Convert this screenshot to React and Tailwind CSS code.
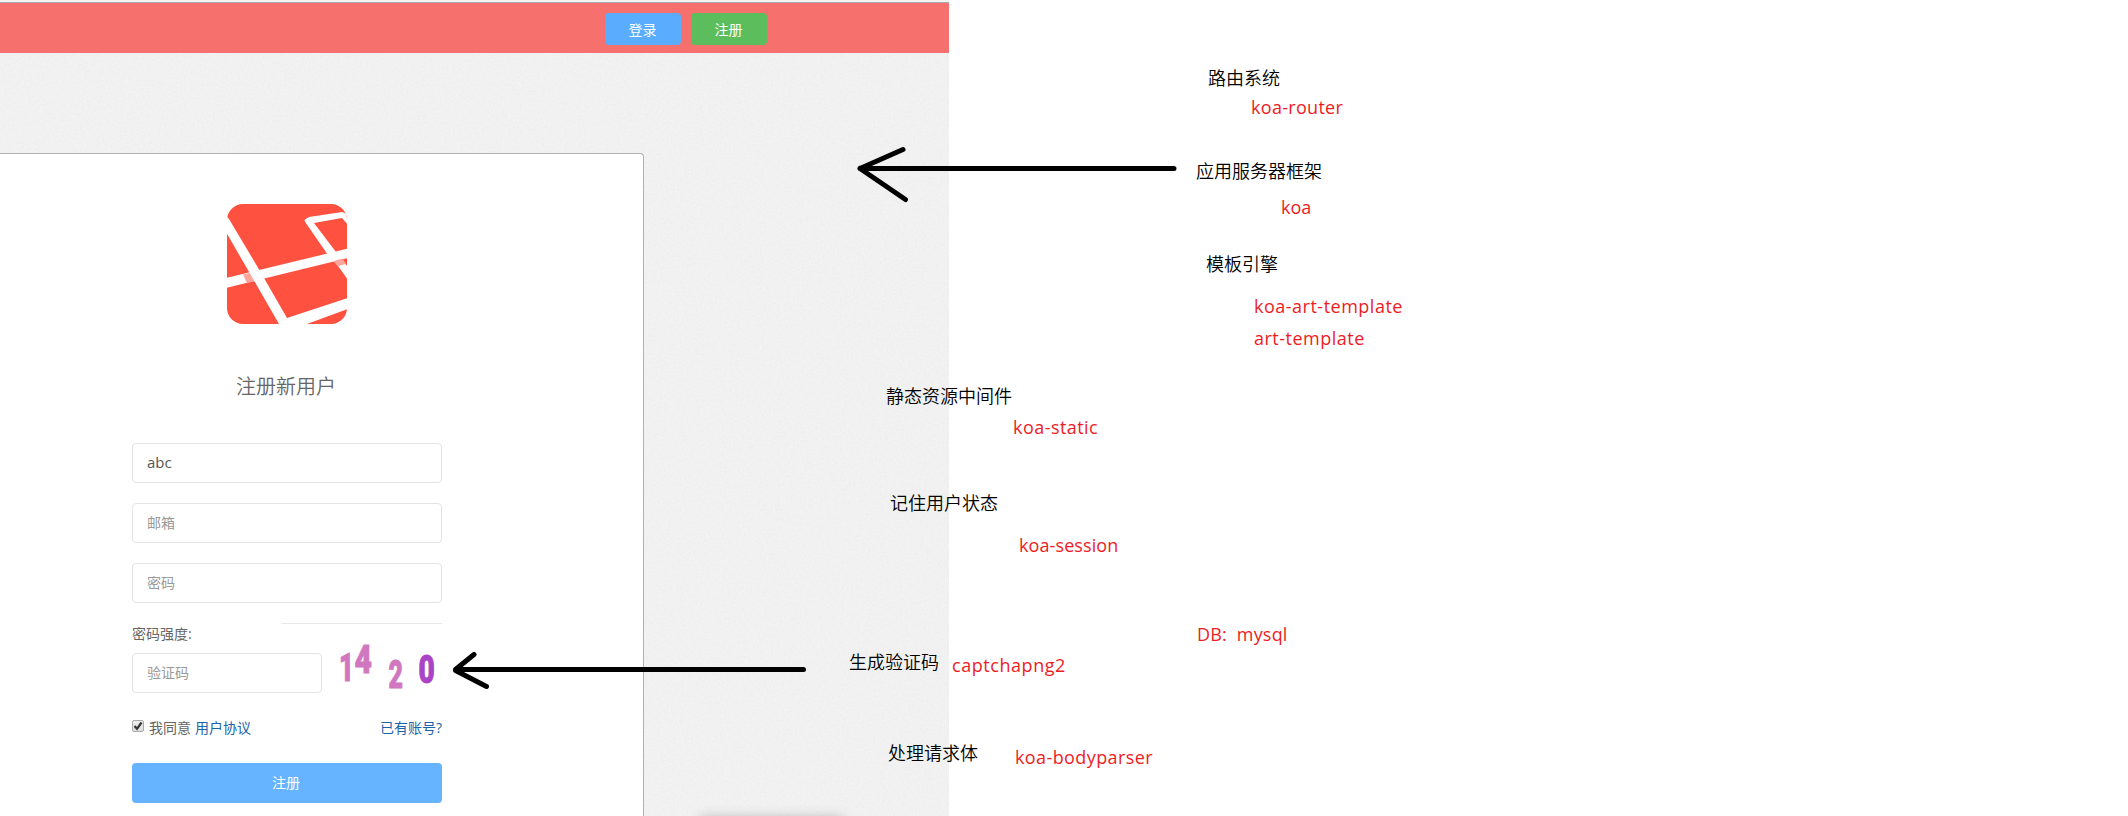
const notes = [
  { text: '路由系统', cls: 'left-[1208px] top-[66px]' },
  { text: '应用服务器框架', cls: 'left-[1196px] top-[159px]' },
  { text: '模板引擎', cls: 'left-[1206px] top-[252px]' },
  { text: '静态资源中间件', cls: 'left-[886px] top-[384px]' },
  { text: '记住用户状态', cls: 'left-[890px] top-[491px]' },
  { text: '生成验证码', cls: 'left-[849px] top-[650px]' },
  { text: '处理请求体', cls: 'left-[888px] top-[741px]' },
];

const packages = [
  { text: 'koa-router', cls: 'left-[1251px] top-[95px] tracking-[0.3px]' },
  { text: 'koa', cls: 'left-[1281px] top-[195px]' },
  { text: 'koa-art-template', cls: 'left-[1254px] top-[294px] tracking-[0.5px]' },
  { text: 'art-template', cls: 'left-[1254px] top-[326px] tracking-[0.5px]' },
  { text: 'koa-static', cls: 'left-[1013px] top-[415px] tracking-[0.45px]' },
  { text: 'koa-session', cls: 'left-[1019px] top-[533px] tracking-[0.1px]' },
  { text: 'DB:  mysql', cls: 'left-[1197px] top-[622px] tracking-[0.2px]' },
  { text: 'captchapng2', cls: 'left-[952px] top-[653px] tracking-[0.55px]' },
  { text: 'koa-bodyparser', cls: 'left-[1015px] top-[745px] tracking-[0.4px]' },
];

function PaperTexture() {
  return (
    <svg className="absolute inset-0 h-full w-full" aria-hidden="true">
      <filter id="grain" x="0" y="0" width="100%" height="100%" colorInterpolationFilters="sRGB">
        <feTurbulence type="fractalNoise" baseFrequency="0.45" numOctaves="2" seed="4" stitchTiles="stitch" />
        <feColorMatrix type="matrix" values="0.035 0 0 0 0.926  0.035 0 0 0 0.926  0.035 0 0 0 0.926  0 0 0 0 1" />
      </filter>
      <rect width="100%" height="100%" filter="url(#grain)" />
    </svg>
  );
}

function Logo() {
  return (
    <svg className="h-[120px] w-[120px]" viewBox="0 0 120 120">
      <defs>
        <clipPath id="tile">
          <rect width="120" height="120" rx="16" />
        </clipPath>
      </defs>
      <g clipPath="url(#tile)">
        <rect width="120" height="120" fill="#ff5140" />
        <path d="M-1 74 121 44.500V54L-1 84Z" fill="#fff" />
        <path d="M16 70.500 25 68.500 29 77 20 79Z" fill="#ffa49b" />
        <path d="M-1 11 2 15 33 67 37 74 60 114 121 94V105L80 120H52L-1 28Z" fill="#fff" />
        <path d="M78 15.500 82 13 115 8 121 10V21L115 14 87 19 109 48 121 63V76L111 62 101 51 78.500 18.500Q77 16 78 15.500Z" fill="#fff" />
        <path d="M106.500 57 115.500 54.500 119 60 111 62Z" fill="#ffa49b" />
      </g>
    </svg>
  );
}

function Captcha() {
  return (
    <svg className="h-10 w-[110px] overflow-visible font-['Roboto'] text-[39px] font-black" viewBox="0 0 110 40">
      <g fill="#d077bf" stroke="#d077bf" strokeWidth="1">
        <text transform="translate(7 27.500) scale(.66 1)">1</text>
        <text transform="translate(22.500 20) scale(.77 1)">4</text>
        <text transform="translate(56.500 34.500) scale(.64 1)">2</text>
      </g>
      <text transform="translate(86.500 29.500) scale(.72 1)" fill="#aa44c6" stroke="#aa44c6" strokeWidth="1">0</text>
    </svg>
  );
}

function Field({ children, dark }) {
  return (
    <div
      className={
        dark
          ? 'flex h-10 items-center rounded border border-[#e4e4e4] bg-white px-3.5 text-[15px] text-[#555]'
          : 'flex h-10 items-center rounded border border-[#e4e4e4] bg-white px-3.5 text-[#999]'
      }
    >
      {children}
    </div>
  );
}

export default function App() {
  return (
    <div className="relative h-[816px] w-[2128px] overflow-hidden bg-white font-['Open_Sans','Noto_Sans_CJK_SC',sans-serif] text-sm">
      <div className="relative flex h-full w-[949px] flex-col overflow-hidden bg-[#f1f1f1]">
        <PaperTexture />
        <header className="relative flex h-[53px] shrink-0 items-start gap-2.5 border-t-2 border-[#f3f3f3] bg-[#f6716e] pl-[605px] text-white shadow-[inset_0_1px_0_#aaa]">
          <button className="mt-[11px] h-8 w-[76px] rounded bg-[#5aacff] pt-px pr-px">登录</button>
          <button className="mt-[11px] h-8 w-[76px] rounded bg-[#5cbd5d] pt-px pr-px">注册</button>
        </header>
        <main className="relative mt-[100px] flex w-[644px] grow flex-col rounded-tr border-t border-r border-[#b0b0b0] bg-white pt-[50px] pl-[132px]">
          <div className="flex w-[310px] flex-col text-[#666]">
            <div className="flex justify-center">
              <Logo />
            </div>
            <h1 className="mt-[48px] h-[30px] pr-0.5 text-center text-xl leading-[30px] font-[350]">注册新用户</h1>
            <div className="mt-[41px] flex flex-col gap-5">
              <Field dark>abc</Field>
              <Field>邮箱</Field>
              <Field>密码</Field>
            </div>
            <div className="mt-5 ml-[149px] h-px bg-[#e8e8e8]" />
            <div className="h-5 leading-5">密码强度:</div>
            <div className="mt-[9px] flex gap-2.5">
              <div className="w-[190px]">
                <Field>验证码</Field>
              </div>
              <Captcha />
            </div>
            <div className="mt-[25px] flex h-5 items-center">
              <span className="mt-[-5px] flex h-3 w-3 items-center justify-center rounded-[2px] border border-[#aaa] bg-linear-to-b from-[#eee] to-[#dcdcdc]">
                <svg className="h-2.5 w-2.5" viewBox="0 0 10 10">
                  <path d="M1.500 5 4 7.800 8.500 1.500" fill="none" stroke="#333" strokeWidth="2.200" />
                </svg>
              </span>
              <span className="ml-[5px]">我同意</span>
              <a className="ml-1 text-[#1c63a9]">用户协议</a>
              <a className="ml-auto text-[#1c63a9]">已有账号?</a>
            </div>
            <button className="mt-[25px] h-10 rounded bg-[#66b3ff] pr-0.5 text-white">注册</button>
          </div>
        </main>
        <div className="absolute top-[819px] left-[702px] h-4 w-[138px] shadow-[0_0_12px_2px_#bbb]" />
      </div>

      <svg
        className="absolute inset-0 h-full w-full"
        viewBox="0 0 2128 816"
        fill="none"
        stroke="#000"
        strokeWidth="5"
        strokeLinecap="round"
        strokeLinejoin="round"
      >
        <path d="M1174 168.500H860L903 149.500M860 168.500 905.500 199.500" />
        <path d="M803.500 669.500H455.500L474 654.500M455.500 670.500 486.500 686.500" />
      </svg>

      {notes.map((n) => (
        <span key={n.text} className={`absolute text-lg leading-6 font-[350] whitespace-pre text-black ${n.cls}`}>
          {n.text}
        </span>
      ))}
      {packages.map((p) => (
        <span key={p.text} className={`absolute text-lg leading-6 whitespace-pre text-[#ed1c24] ${p.cls}`}>
          {p.text}
        </span>
      ))}
    </div>
  );
}
